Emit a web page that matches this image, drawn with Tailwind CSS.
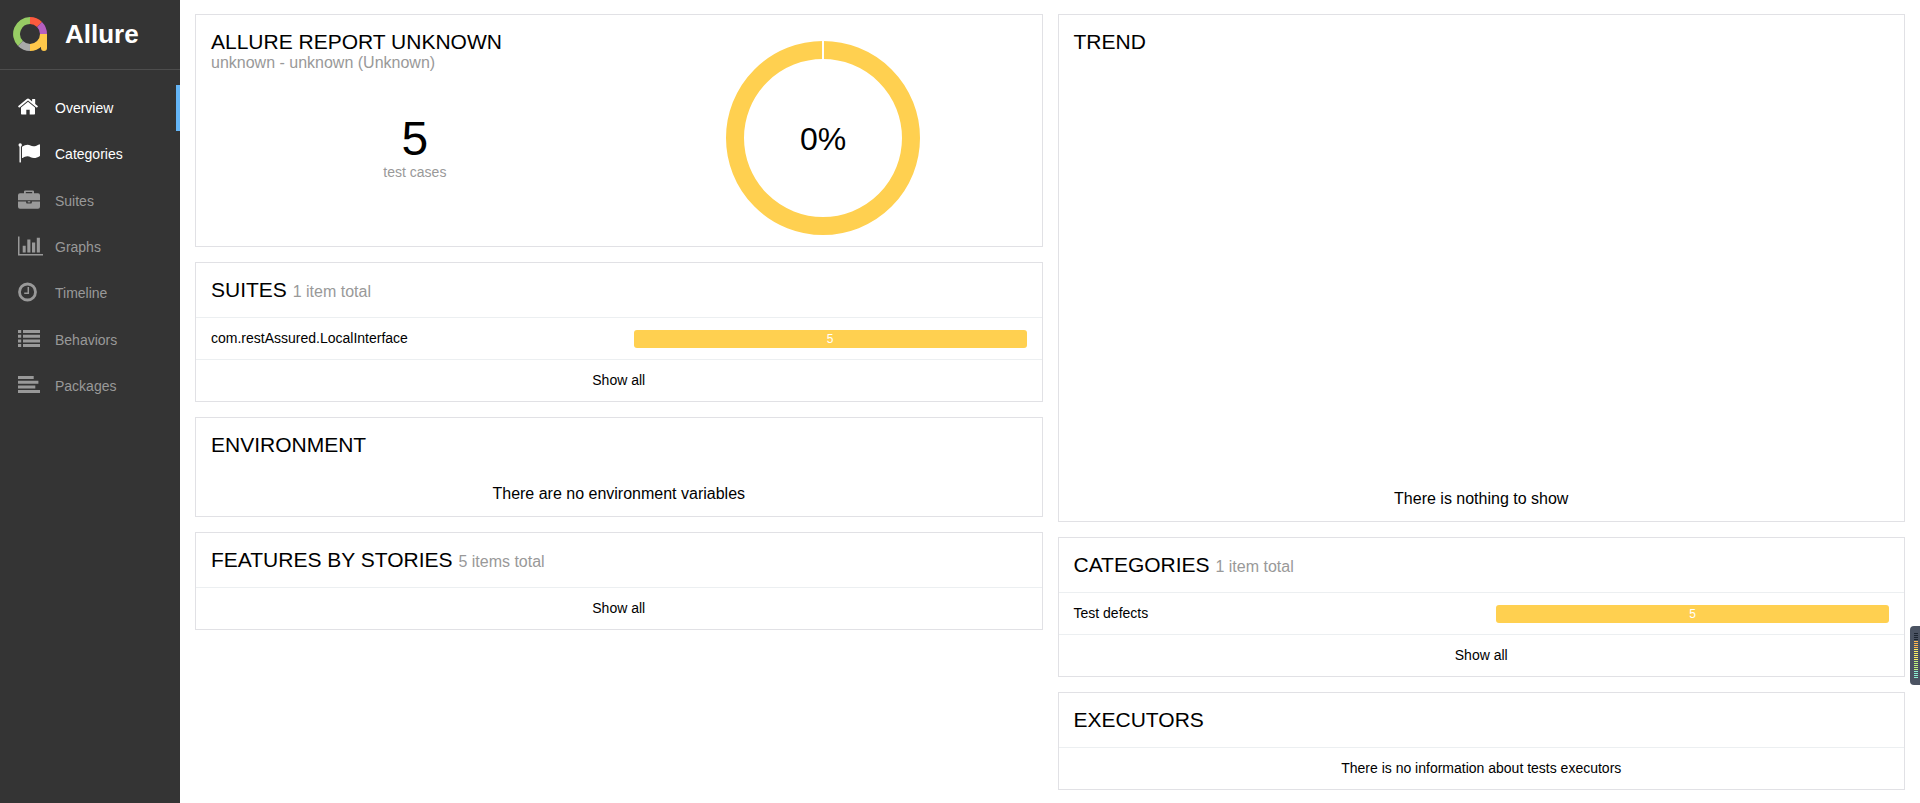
<!DOCTYPE html>
<html lang="en">
<head>
    <meta charset="UTF-8">
    <meta name="viewport" content="width=device-width, initial-scale=1.0">
    <title>Allure Report</title>
    <script src="https://cdn.jsdelivr.net/npm/@tailwindcss/browser@4"></script>
    <style>
        body {
            font-family: 'Liberation Sans', Arial, sans-serif;
        }
    </style>
</head>
<body class="flex min-h-screen bg-white text-sm text-black">

    <!-- Sidebar -->
    <aside class="w-[180px] shrink-0 bg-[#343434]">
        <a href="#" class="flex h-[70px] items-center gap-[18px] border-b border-[#4d4d4d] pl-[13px] pb-[2px] text-white">
            <svg class="size-[34px]" viewBox="0 0 34 34" fill="none" stroke-width="7">
                <path d="M7.5 26.5A13.5 13.5 0 0 1 17 3.5" stroke="#97cc64"/>
                <path d="M17 3.5A13.5 13.5 0 0 1 26.5 7.5" stroke="#fd5a3e"/>
                <path d="M26.5 7.5A13.5 13.5 0 0 1 30.5 17" stroke="#b65fc0"/>
                <path d="M17 30.5A13.5 13.5 0 0 1 7.5 26.5" stroke="#aaa"/>
                <path d="M30.5 17A13.5 13.5 0 0 1 17 30.5" stroke="#ffc84a"/>
                <path d="M31 17V31" stroke="#ffc84a" stroke-width="6"/>
                <circle cx="31" cy="31" r="3" fill="#ffc84a" stroke="none"/>
            </svg>
            <span class="text-[26px] leading-[32px] font-bold">Allure</span>
        </a>
        <nav class="mt-[15px]">
            <ul class="grid h-[324px] auto-rows-fr text-[#999]">
                <li>
                    <a href="#" class="flex h-full items-center border-r-4 border-[#64b5f6] pl-[18px] text-white">
                        <svg class="mr-[15px] mb-[2px] w-[22px] h-[20px]" viewBox="0 0 22 20" fill="currentColor">
                            <path d="M10 4.8L3 10.6V16.7Q3 17.4 3.7 17.4H8.3V12.7H11.7V17.4H16.3Q17 17.4 17 16.7V10.6Z"/>
                            <path d="M20 9.3L17.2 7V2.3Q17.2 1.9 16.8 1.9H14.5Q14.1 1.9 14.1 2.3V4.4L11.2 2Q10 1.1 8.8 2L0 9.3L.9 10.4L1.6 10.4L10 3.5L18.4 10.4L19.1 10.4Z"/>
                        </svg>
                        Overview
                    </a>
                </li>
                <li>
                    <a href="#" class="flex h-full items-center pl-[18px] text-white">
                        <svg class="mr-[15px] mb-[2px] w-[22px] h-[20px]" viewBox="0 0 22 20" fill="currentColor">
                            <circle cx="2.2" cy="2" r="1.7"/>
                            <path d="M1.5 2H2.9V19Q2.9 19.5 2.2 19.5T1.5 19Z"/>
                            <path d="M4 3.8Q7 1.8 9.5 1.7C12 1.7 13 3.3 15.4 3.3C17.5 3.3 19.6 2.1 21 1.4Q22 1.2 22 2V12.6Q22 13.1 21.6 13.3C19.8 14.2 18 15.1 16 15.1C13.3 15.1 12 13.3 9.4 13.3C7.7 13.3 6.1 14.2 4.8 15Q4 15.2 4 14.5Z"/>
                        </svg>
                        Categories
                    </a>
                </li>
                <li>
                    <a href="#" class="flex h-full items-center pl-[18px]">
                        <svg class="mr-[15px] mb-[2px] w-[22px] h-[20px]" viewBox="0 0 22 20" fill="currentColor">
                            <path d="M2 3.2H6V1.6Q6 .4 7.2 .4H14.8Q16 .4 16 1.6V3.2H20Q22 3.2 22 5.2V10.3H0V5.2Q0 3.2 2 3.2ZM7.8 3.2H14.2V2H7.8Z" fill-rule="evenodd"/>
                            <path d="M0 11.4H8.2V12.8Q8.2 13.5 8.9 13.5H13.1Q13.8 13.5 13.8 12.8V11.4H22V16.8Q22 18.8 20 18.8H2Q0 18.8 0 16.8Z"/>
                            <path d="M9.7 11.2H12.3V12.4H9.7Z"/>
                        </svg>
                        Suites
                    </a>
                </li>
                <li>
                    <a href="#" class="flex h-full items-center pl-[18px]">
                        <svg class="mr-[12px] mb-[2px] w-[25px] h-[20px]" viewBox="0 0 25 20" fill="currentColor">
                            <path d="M0 .5H1.5V18H25V19.5H0Z"/>
                            <path d="M4.7 9.8H7.7V16.4H4.7ZM9.3 3.4H12.4V16.4H9.3ZM14 6.6H17.2V16.4H14ZM18.8 1.8H21.9V16.4H18.8Z"/>
                        </svg>
                        Graphs
                    </a>
                </li>
                <li>
                    <a href="#" class="flex h-full items-center pl-[18px]">
                        <svg class="mr-[15px] mb-[2px] w-[22px] h-[20px]" viewBox="0 0 22 20" fill="none" stroke="currentColor">
                            <circle cx="9.5" cy="10" r="8" stroke-width="2.8"/>
                            <path d="M10.3 5V11.2H6.2" stroke-width="1.5"/>
                        </svg>
                        Timeline
                    </a>
                </li>
                <li>
                    <a href="#" class="flex h-full items-center pl-[18px]">
                        <svg class="mr-[15px] mb-[2px] w-[22px] h-[20px]" viewBox="0 0 22 20" fill="currentColor">
                            <path d="M0 1H3.2V4H0ZM5 1H22V4H5ZM0 5.7H3.2V8.7H0ZM5 5.7H22V8.7H5ZM0 10.4H3.2V13.4H0ZM5 10.4H22V13.4H5ZM0 15.1H3.2V18.1H0ZM5 15.1H22V18.1H5Z"/>
                        </svg>
                        Behaviors
                    </a>
                </li>
                <li>
                    <a href="#" class="flex h-full items-center pl-[18px]">
                        <svg class="mr-[15px] mb-[2px] w-[22px] h-[20px]" viewBox="0 0 22 20" fill="currentColor">
                            <path d="M0 1H15.7V4H0ZM0 5.7H20.4V8.7H0ZM0 10.4H17.3V13.4H0ZM0 15.1H22V18.1H0Z"/>
                        </svg>
                        Packages
                    </a>
                </li>
            </ul>
        </nav>
    </aside>

    <!-- Widgets -->
    <main class="grid flex-1 grid-cols-2 items-start gap-[15px] px-[15px] pt-[14px] pb-[13px]">
        <div class="flex flex-col gap-[15px]">

            <section class="grid grid-cols-2 border border-[#e1e1e5] px-[15px] pt-[15px] pb-[11px]">
                <div>
                    <h2 class="text-[21px] leading-[24px] whitespace-nowrap">ALLURE REPORT UNKNOWN</h2>
                    <p class="text-base leading-[18px] text-[#999]">unknown - unknown (Unknown)</p>
                    <div class="pt-[43px] text-center">
                        <div class="text-5xl leading-[48px]">5</div>
                        <div class="leading-[18px] text-[#999]">test cases</div>
                    </div>
                </div>
                <div class="flex justify-center pt-[11px]">
                    <svg class="size-[194px]" viewBox="0 0 194 194">
                        <circle cx="97" cy="97" r="88" fill="none" stroke="#ffd050" stroke-width="18"/>
                        <path d="M97 0V19" stroke="#fff" stroke-width="2"/>
                        <text x="97" y="109" text-anchor="middle" class="text-[32px]">0%</text>
                    </svg>
                </div>
            </section>

            <section class="border border-[#e1e1e5]">
                <h2 class="p-[15px] text-[21px] leading-[24px]">SUITES <small class="text-base leading-[18px] text-[#999]">1 item total</small></h2>
                <a href="#" class="grid grid-cols-2 items-end border-t border-[#eceff1] px-[15px] pt-[10px] pb-[11px]">
                    <span class="leading-[20px]">com.restAssured.LocalInterface</span>
                    <span class="ml-[15px] rounded-[3px] bg-[#ffd050] text-center text-xs leading-[18px] text-white">5</span>
                </a>
                <a href="#" class="block border-t border-[#eceff1] pt-[10px] pb-[11px] text-center leading-[20px]">Show all</a>
            </section>

            <section class="border border-[#e1e1e5]">
                <h2 class="p-[15px] text-[21px] leading-[24px]">ENVIRONMENT</h2>
                <p class="py-[13px] text-center text-base leading-[18px]">There are no environment variables</p>
            </section>

            <section class="border border-[#e1e1e5]">
                <h2 class="p-[15px] text-[21px] leading-[24px]">FEATURES BY STORIES <small class="text-base leading-[18px] text-[#999]">5 items total</small></h2>
                <a href="#" class="block border-t border-[#eceff1] pt-[10px] pb-[11px] text-center leading-[20px]">Show all</a>
            </section>
        </div>

        <div class="flex flex-col gap-[15px]">

            <section class="flex min-h-[508px] flex-col justify-between border border-[#e1e1e5]">
                <h2 class="p-[15px] text-[21px] leading-[24px]">TREND</h2>
                <p class="py-[13px] text-center text-base leading-[18px]">There is nothing to show</p>
            </section>

            <section class="border border-[#e1e1e5]">
                <h2 class="p-[15px] text-[21px] leading-[24px]">CATEGORIES <small class="text-base leading-[18px] text-[#999]">1 item total</small></h2>
                <a href="#" class="grid grid-cols-2 items-end border-t border-[#eceff1] px-[15px] pt-[10px] pb-[11px]">
                    <span class="leading-[20px]">Test defects</span>
                    <span class="ml-[15px] rounded-[3px] bg-[#ffd050] text-center text-xs leading-[18px] text-white">5</span>
                </a>
                <a href="#" class="block border-t border-[#eceff1] pt-[10px] pb-[11px] text-center leading-[20px]">Show all</a>
            </section>

            <section class="border border-[#e1e1e5]">
                <h2 class="p-[15px] text-[21px] leading-[24px]">EXECUTORS</h2>
                <p class="border-t border-[#eceff1] pt-[10px] pb-[11px] text-center leading-[20px]">There is no information about tests executors</p>
            </section>
        </div>
    </main>

    <!-- Level meter docked to the window edge -->
    <div class="fixed top-[626px] right-0 h-[59px] w-[10px] rounded-l-[4px] bg-[#4b5362]">
        <svg class="mt-[7px] ml-[4px] h-[46px] w-[4px]" viewBox="0 0 4 46" fill="none" stroke-width="4" stroke-dasharray="1 1">
            <path d="M2 0V8" stroke="#1c2430"/>
            <path d="M2 8V16" stroke="#ffb84e"/>
            <path d="M2 16V28" stroke="#fbf064"/>
            <path d="M2 28V38" stroke="#c0f47c"/>
            <path d="M2 38V46" stroke="#8cf0d0"/>
        </svg>
    </div>

</body>
</html>
